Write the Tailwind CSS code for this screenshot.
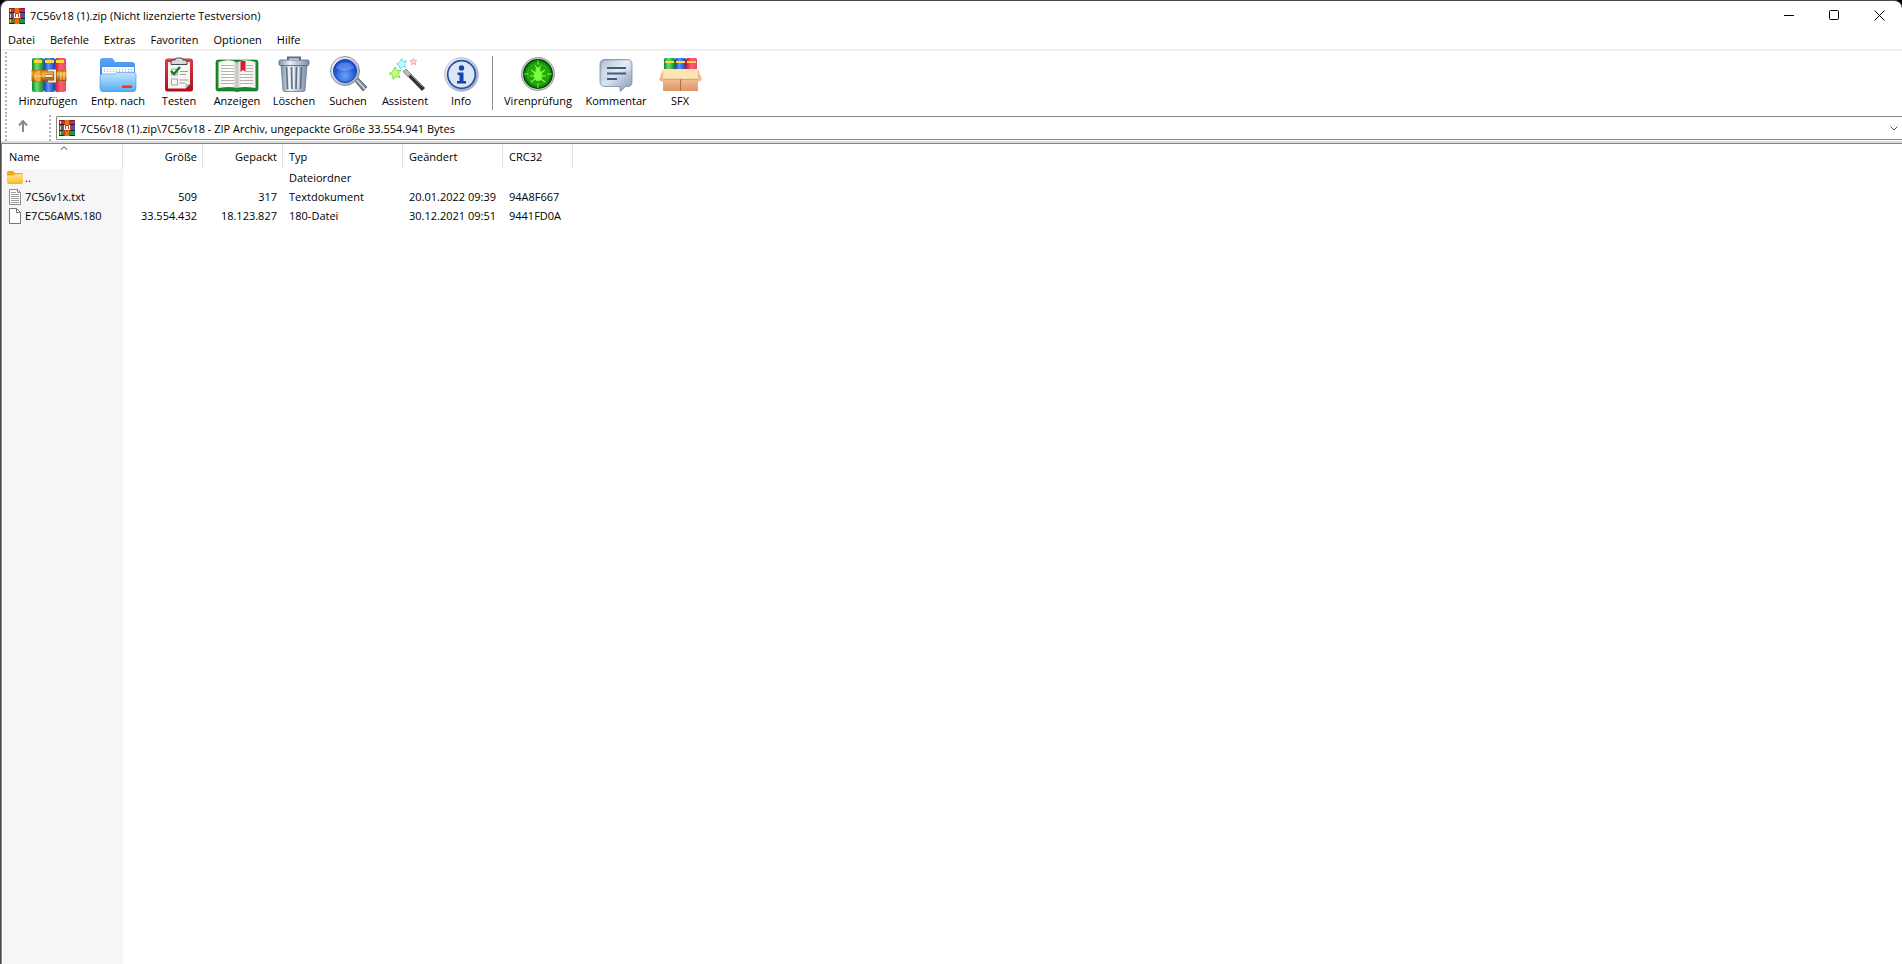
<!DOCTYPE html>
<html lang="de">
<head>
<meta charset="utf-8">
<title>7C56v18 (1).zip (Nicht lizenzierte Testversion)</title>
<script src="https://cdn.jsdelivr.net/npm/@tailwindcss/browser@4"></script>
</head>
<body class="bg-black">
<svg class="absolute size-0" aria-hidden="true">
  <defs>
    <linearGradient id="gGreen"><stop offset="0" stop-color="#0a8a2c"/><stop offset=".4" stop-color="#6fdc74"/><stop offset="1" stop-color="#08812a"/></linearGradient>
    <linearGradient id="gBlue"><stop offset="0" stop-color="#1440b4"/><stop offset=".4" stop-color="#5c97f5"/><stop offset="1" stop-color="#1a3fb0"/></linearGradient>
    <linearGradient id="gRed"><stop offset="0" stop-color="#d4143a"/><stop offset=".5" stop-color="#ff5d74"/><stop offset="1" stop-color="#e04a66"/></linearGradient>
    <linearGradient id="gBelt" x2="0" y2="1"><stop offset="0" stop-color="#b9690f"/><stop offset=".35" stop-color="#f8b84a"/><stop offset="1" stop-color="#9c500a"/></linearGradient>
    <linearGradient id="gFolder" x2="0" y2="1"><stop offset="0" stop-color="#c5e6ff"/><stop offset="1" stop-color="#4fa9f6"/></linearGradient>
    <linearGradient id="gBack" x2="0" y2="1"><stop offset="0" stop-color="#5aa5fb"/><stop offset="1" stop-color="#2567d8"/></linearGradient>
    <linearGradient id="gClip" x2="0" y2="1"><stop offset="0" stop-color="#e23a44"/><stop offset="1" stop-color="#a90f1c"/></linearGradient>
    <linearGradient id="gPageL"><stop offset="0" stop-color="#f4f4ef"/><stop offset=".75" stop-color="#ffffff"/><stop offset="1" stop-color="#bdbdb6"/></linearGradient>
    <linearGradient id="gPageR"><stop offset="0" stop-color="#c4c4bd"/><stop offset=".25" stop-color="#ffffff"/><stop offset="1" stop-color="#efefe9"/></linearGradient>
    <linearGradient id="gSteel"><stop offset="0" stop-color="#7d90a6"/><stop offset=".35" stop-color="#e8eff7"/><stop offset="1" stop-color="#7d90a6"/></linearGradient>
    <linearGradient id="gSteelV" x2="1" y2="1"><stop offset="0" stop-color="#8fa2bc"/><stop offset=".45" stop-color="#dbe5f1"/><stop offset="1" stop-color="#8295b0"/></linearGradient>
    <radialGradient id="gLens" cy=".7"><stop offset="0" stop-color="#6aa4fb"/><stop offset="1" stop-color="#1c4fd0"/></radialGradient>
    <radialGradient id="gVirus"><stop offset="0" stop-color="#3fc818"/><stop offset="1" stop-color="#0c8a05"/></radialGradient>
    <linearGradient id="gRing" x2="1" y2="1"><stop offset="0" stop-color="#ffffff"/><stop offset="1" stop-color="#8f9cb3"/></linearGradient>
    <linearGradient id="gBox" x2="0" y2="1"><stop offset="0" stop-color="#f6c399"/><stop offset="1" stop-color="#dc9463"/></linearGradient>
    <linearGradient id="gYellow" x2="0" y2="1"><stop offset="0" stop-color="#ffe38c"/><stop offset="1" stop-color="#fbc02f"/></linearGradient>
    <symbol id="rar" viewBox="0 0 16 16">
      <rect width="16" height="5" fill="#d0264f"/><rect y="5" width="16" height="5" fill="#4650c0"/><rect y="10" width="16" height="6" fill="#179a3b"/>
      <path d="M0 .5h16" stroke="#8e1638"/><path d="M0 4.500h16M0 10.500h16M0 15.500h16" stroke="#1d2148"/>
      <path d="M1.500 1v3M1.500 6v4M1.500 11.500v3" stroke="#f5cf3a"/>
      <rect x="5" width="6" height="16" fill="#e8701c"/><path d="M5.500 0v16M10.500 0v16" stroke="#a9470c"/>
      <rect x="4" y="5" width="8" height="6" fill="#b8441b"/><path d="M5.500 5v4.500h5V5" fill="none" stroke="#fff"/><path d="M8 6v4" stroke="#fff" stroke-width="2"/>
    </symbol>
  </defs>
</svg>

<div class="flex h-screen flex-col overflow-hidden rounded-t-lg border-t border-l border-[#4a4a4c] bg-white font-['Open_Sans','Noto_Sans',sans-serif] text-[11px] leading-4 text-black">
  <header class="flex h-[29px] shrink-0 items-center pl-2">
    <svg class="size-4 shrink-0"><use href="#rar"/></svg>
    <h1 class="flex-1 pl-[5px]">7C56v18 (1).zip (Nicht lizenzierte Testversion)</h1>
    <button aria-label="Minimieren" class="flex h-full w-[46px] items-center justify-center"><svg class="h-[11px] w-[10px]" viewBox="0 0 10 11"><path d="M0 5.500h10" stroke="#000"/></svg></button>
    <button aria-label="Maximieren" class="flex h-full w-[45px] items-center justify-center"><svg class="size-[11px]" viewBox="0 0 11 11"><rect x=".5" y=".5" width="9" height="9" rx="1" fill="none" stroke="#000"/></svg></button>
    <button aria-label="Schließen" class="flex h-full w-[45px] items-center justify-center"><svg class="size-[11px]" viewBox="0 0 11 11"><path d="M.5.5l10 10M10.500.5l-10 10" stroke="#000"/></svg></button>
  </header>

  <nav class="flex h-[19px] shrink-0 items-end gap-[15px] pb-px pl-[7px]" aria-label="Menü">
    <button>Datei</button><button>Befehle</button><button>Extras</button><button>Favoriten</button><button>Optionen</button><button>Hilfe</button>
  </nav>

  <div class="flex h-[66px] shrink-0 border-t-2 border-[#f0f0f0] pl-1">
    <div class="mt-px mr-1 w-[2px] bg-[repeating-linear-gradient(to_bottom,#b4b4b4_0_2px,#fff_2px_4px)]"></div>
    <div class="flex pt-[5px]" role="toolbar" aria-label="Werkzeugleiste">
      <button class="flex w-[74px] flex-col items-center gap-px whitespace-nowrap">
        <svg class="h-9 w-11" viewBox="0 0 44 36">
          <rect x="6" y="2" width="12" height="34" rx="2" fill="url(#gGreen)"/><rect x="18" y="2" width="11" height="34" rx="2" fill="url(#gBlue)"/><rect x="29" y="2" width="11" height="34" rx="2" fill="url(#gRed)"/>
          <path d="M8 5.500h8M19 5.500h9M30 5.500h8" stroke="#ffd83a" stroke-width="3"/>
          <rect x="5.500" y="14" width="35" height="11" fill="url(#gBelt)"/>
          <path d="M13 14a6 6 0 1 0 0 12h2V14z" fill="#f3ad3c" stroke="#a8620c" stroke-width=".7"/>
          <path d="M8 20h13M35 16v8M38 16v8" stroke="#ffd98a"/>
          <path d="M22 14.500h7v11h-7M26 20h-6" fill="none" stroke="#713d0a" stroke-width="3"/><path d="M22 14.500h7v11h-7M26 20h-6" fill="none" stroke="#f2f2f2" stroke-width="1.800"/>
        </svg><span>Hinzufügen</span></button>
      <button class="flex w-[66px] flex-col items-center gap-px whitespace-nowrap">
        <svg class="h-9 w-11" viewBox="0 0 44 36">
          <path d="M4 32V5q0-3 3-3h8q2 0 3 2l1 2h17q3 0 3 3v23z" fill="url(#gBack)"/>
          <path d="M6 11h32v13H6z" fill="#f9fbfd"/><path d="M8 13.500h29M8 15.500h29" stroke="#aab4be" stroke-dasharray="1 2"/>
          <path d="M4 20q0-2 2-2h13l2-1.500h17q2 0 2 2V32q0 4-4 4H8q-4 0-4-4z" fill="url(#gFolder)" stroke="#3f91e4" stroke-width=".6"/>
          <rect x="26" y="29.500" width="10" height="2.500" fill="#e63c1a"/>
        </svg><span>Entp. nach</span></button>
      <button class="flex w-[56px] flex-col items-center gap-px whitespace-nowrap">
        <svg class="h-9 w-11" viewBox="0 0 44 36">
          <rect x="8" y="2.500" width="28" height="33" rx="2.500" fill="url(#gClip)"/>
          <path d="M11 6h22v22l-4.500 4.500H11z" fill="#f7f6f3"/><path d="M33 28l-4.500 4.500V28z" fill="#bdb9b5"/>
          <path d="M14 8.500V6q0-2 2-2h2q0-2 2-2h4q2 0 2 2h2q2 0 2 2v2.500z" fill="#d7d9dc" stroke="#474a50"/>
          <path d="M14.500 13h6v6h-6zM14.500 23h6v6h-6z" fill="none" stroke="#a3a3a3"/>
          <path d="M14 15l3 3 6-7" fill="none" stroke="#118223" stroke-width="2.400"/>
          <path d="M23 15.500h8M23 18.500h6M22.500 24h9M22.500 27h6" stroke="#a09c98"/>
        </svg><span>Testen</span></button>
      <button class="flex w-[60px] flex-col items-center gap-px whitespace-nowrap">
        <svg class="h-9 w-11" viewBox="0 0 44 36">
          <path d="M1 6q0-2 2-2h38q2 0 2 2v27q0 2-2 2H25q-3 1-6 0H3q-2 0-2-2z" fill="#198a2b" stroke="#0b641b" stroke-width=".6"/>
          <path d="M3.500 6Q15 2.500 22 6.500V32q-7-2-18.500 0z" fill="url(#gPageL)"/><path d="M40.500 6Q29 2.500 22 6.500V32q7-2 18.500 0z" fill="url(#gPageR)"/>
          <path d="M6 9.500h13M6 12.500h13M6 15.500h13M6 18.500h13M6 21.500h13M6 24.500h13M6 27.500h13M25 18.500h13M31 9.500h7M31 12.500h7M31 15.500h7M25 21.500h13M25 24.500h13M25 27.500h13" stroke="#b4b4b0"/>
          <path d="M25.500 5h5v11L28 14l-2.500 2z" fill="#d3202b"/>
        </svg><span>Anzeigen</span></button>
      <button class="flex w-[54px] flex-col items-center gap-px whitespace-nowrap">
        <svg class="h-9 w-11" viewBox="0 0 44 36">
          <path d="M16 4V1.500h12V4" fill="none" stroke="#5a6b80" stroke-width="2"/>
          <path d="M9 9h26l-2 25q0 1.500-2 1.500H13q-2 0-2-1.500z" fill="url(#gSteel)" stroke="#5d6f86" stroke-width=".7"/>
          <path d="M14.500 11l1 22M19.500 11l.5 22M24.500 11L24 33M29.500 11l-1 22" stroke="#62748a" stroke-width="1.700"/><path d="M16.500 11l1 22M21.500 11l.3 22M26.500 11L26 33" stroke="#f4f8fc"/>
          <rect x="7" y="4" width="30" height="5.500" rx="1.500" fill="url(#gSteel)" stroke="#536478" stroke-width=".8"/>
        </svg><span>Löschen</span></button>
      <button class="flex w-[54px] flex-col items-center gap-px whitespace-nowrap">
        <svg class="h-9 w-11" viewBox="0 0 44 36">
          <path d="M28 24l3-3 10 10-4 4z" fill="#79828d" stroke="#454d58" stroke-width=".7"/><path d="M30 23l9 10" stroke="#d0d7df" stroke-width="1.500"/>
          <circle cx="19" cy="15" r="14.500" fill="url(#gRing)" stroke="#8795ab"/>
          <circle cx="19" cy="15" r="11.500" fill="url(#gLens)" stroke="#2140a0"/>
          <path d="M10 12a9.500 8 0 0 1 18 0q-9 6-18 0z" fill="#9ec0ff" opacity=".4"/>
        </svg><span>Suchen</span></button>
      <button class="flex w-[60px] flex-col items-center gap-px whitespace-nowrap">
        <svg class="h-9 w-11" viewBox="0 0 44 36">
          <path d="M20 15.500l3-2.500 19 19-3 3z" fill="#34343a"/><path d="M20 15.500l3-2.500 5 5-3 3z" fill="#b9b9bd" stroke="#77777d" stroke-width=".6"/><path d="M27 18l12.500 12.500" stroke="#88888f"/>
          <path d="M12 11l1.700 3.600 4-.2-2.300 3.400 1.600 3.600-3.900-.8-3 2.700-.5-4L6 17.500l3.600-1.700z" fill="#c9f98a" stroke="#7fdf35"/>
          <path d="M18.500 2.500l1.500 3 3.500-.5-2 3 1.500 3-3.500-.5-2.500 2.500-.5-3.500-3-1.500 3-1.500z" fill="#c8f8ff" stroke="#4fd6f2" stroke-width=".8"/>
          <path d="M30.500 2.500l.8 2.200 2.500-.2-1.800 1.700 1 2.500-2.500-1.200-2 1.300.4-2.500-1.900-1.500 2.500-.2z" fill="#ffe2e2" stroke="#f28a8a" stroke-width=".7"/>
        </svg><span>Assistent</span></button>
      <button class="flex w-[52px] flex-col items-center gap-px whitespace-nowrap">
        <svg class="h-9 w-11" viewBox="0 0 44 36">
          <circle cx="22.500" cy="18.500" r="16.800" fill="url(#gRing)" stroke="#a9b3c4" stroke-width=".8"/>
          <circle cx="22.500" cy="18.500" r="13.800" fill="#dce6f5" stroke="#2450ac" stroke-width="1.700"/>
          <circle cx="22.500" cy="12" r="2.700" fill="#1642b0"/><path d="M18.500 16.500h6V25h2.500v2.500h-9V25h2.500v-6h-2z" fill="#1642b0"/>
        </svg><span>Info</span></button>
      <div class="mr-1 ml-[5px] h-[54px] w-px bg-[#8c8c8c]"></div>
      <button class="flex w-[82px] flex-col items-center gap-px whitespace-nowrap">
        <svg class="h-9 w-11" viewBox="0 0 44 36">
          <circle cx="22" cy="18" r="16.500" fill="#c8cbc8" stroke="#8d928d" stroke-width=".8"/>
          <circle cx="22" cy="18" r="14.200" fill="url(#gVirus)" stroke="#074407" stroke-width="1.500"/>
          <circle cx="22" cy="18" r="10.500" fill="none" stroke="#46d22c" stroke-width=".6"/>
          <path d="M22 4v5M22 27v5M8 18h5M31 18h5" stroke="#72f04c"/>
          <ellipse cx="22" cy="19.500" rx="4" ry="5.500" fill="#7dff3c"/><circle cx="22" cy="13.500" r="2.300" fill="#7dff3c"/>
          <path d="M19 17l-4-3M25 17l4-3M18 20h-4M26 20h4M19 23l-4 3M25 23l4 3M21 12l-2-2.500M23 12l2-2.500" stroke="#7dff3c" stroke-width="1.200"/>
        </svg><span>Virenprüfung</span></button>
      <button class="flex w-[74px] flex-col items-center gap-px whitespace-nowrap">
        <svg class="h-9 w-11" viewBox="0 0 44 36">
          <path d="M11 3.500h22q5 0 5 5v17q0 5-4 5h-2.500l-5 5-1-5H11q-5 0-5-5v-17q0-5 5-5z" fill="url(#gSteelV)" stroke="#7a8ca8" stroke-width=".8"/>
          <path d="M11.500 5h21q4 0 4 4v6Q22 14 7.500 22V9q0-4 4-4z" fill="#fff" opacity=".3"/>
          <path d="M13 12h19M13 17.500h19M13 23h10" stroke="#465b7c" stroke-width="1.800"/>
        </svg><span>Kommentar</span></button>
      <button class="flex w-[54px] flex-col items-center gap-px whitespace-nowrap">
        <svg class="h-9 w-11" viewBox="0 0 44 36">
          <rect x="6" y="2" width="11" height="14" rx="1.500" fill="url(#gGreen)"/><rect x="17" y="2" width="11" height="14" rx="1.500" fill="url(#gBlue)"/><rect x="28" y="2" width="11" height="14" rx="1.500" fill="url(#gRed)"/>
          <path d="M7 6h9M18 6h9M29 6h9" stroke="#ffd83a" stroke-width="2"/>
          <path d="M5 22h35v13H5z" fill="url(#gBox)"/><path d="M22.500 23v12" stroke="#b06e42"/>
          <path d="M5 13h35v10H5z" fill="#fde3b6"/><path d="M5 13L1 24l4 2zM40 13l4 11-4 2z" fill="#efb98a"/><path d="M5 23.300h35" stroke="#c98a5c" stroke-width=".7"/>
        </svg><span>SFX</span></button>
    </div>
  </div>

  <div class="flex h-[26px] shrink-0 pl-1">
    <div class="w-[2px] bg-[repeating-linear-gradient(to_bottom,#b4b4b4_0_2px,#fff_2px_4px)]"></div>
    <button aria-label="Übergeordneter Ordner" class="flex w-8 items-center justify-center pb-1"><svg class="h-3 w-[10px]" viewBox="0 0 10 12"><path d="M5 12V1M1 5.500L5 1l4 4.500" fill="none" stroke="#8a8a8a" stroke-width="2"/></svg></button>
    <div class="ml-[10px] w-[2px] bg-[repeating-linear-gradient(to_bottom,#b4b4b4_0_2px,#fff_2px_4px)]"></div>
    <div class="mt-px ml-[5px] flex h-6 flex-1 items-center rounded-l-xs border-y border-l border-[#868686] pl-[2px]">
      <svg class="size-4 shrink-0"><use href="#rar"/></svg>
      <select aria-label="Adresse" class="h-full min-w-0 flex-1 appearance-none bg-white pt-px pl-[5px] outline-none"><option>7C56v18 (1).zip\7C56v18 - ZIP Archiv, ungepackte Größe 33.554.941 Bytes</option></select>
      <svg class="mr-1 h-[5px] w-2 shrink-0" viewBox="0 0 8 5"><path d="M.5.5L4 4 7.500.5" fill="none" stroke="#555"/></svg>
    </div>
  </div>

  <main class="min-h-0 flex-1 border-t-2 border-[#dcdcdc]">
    <div class="h-full border-t border-l border-[#828790] pl-px">
      <table class="h-full w-[570px] table-fixed border-separate border-spacing-0 whitespace-nowrap">
        <colgroup><col class="w-[120px]"><col class="w-[80px]"><col class="w-[80px]"><col class="w-[120px]"><col class="w-[100px]"><col class="w-[70px]"></colgroup>
        <thead>
          <tr class="h-[25px] *:border-r *:border-[#e2e2e2] *:py-0 *:pr-[5px] *:pl-[6px] *:text-left *:font-normal">
            <th scope="col" aria-sort="ascending" class="relative">Name<svg class="absolute top-[2px] left-[57px] h-1 w-2" viewBox="0 0 8 4"><path d="M.5 4L4 .7 7.500 4" fill="none" stroke="#444"/></svg></th>
            <th scope="col"><div class="text-right">Größe</div></th>
            <th scope="col"><div class="text-right">Gepackt</div></th>
            <th scope="col">Typ</th><th scope="col">Geändert</th><th scope="col">CRC32</th>
          </tr>
        </thead>
        <tbody>
          <tr class="h-[19px] *:px-[6px] *:pt-0 *:pb-px">
            <td class="bg-[#f6f6f6]"><div class="-ml-[2px] flex items-center gap-[2px]"><svg class="size-4" viewBox="0 0 16 16"><path d="M0 2.500Q0 1 1.500 1H6L8 3h6.500Q16 3 16 4.500v3H0z" fill="#f2ab0c"/><path d="M0 5.500h6L8 4h6.500Q16 4 16 5.500V12q0 1.500-1.500 1.500h-13Q0 13.500 0 12z" fill="url(#gYellow)"/><path d="M1 13.300h14" stroke="#e09c10" stroke-width=".7"/></svg>..</div></td>
            <td></td><td></td><td>Dateiordner</td><td></td><td></td>
          </tr>
          <tr class="h-[19px] *:px-[6px] *:pt-0 *:pb-px">
            <td class="bg-[#f6f6f6]"><div class="-ml-[2px] flex items-center gap-[2px]"><svg class="size-4" viewBox="0 0 16 16"><path d="M2.500.5h8l3 3v12h-11z" fill="#fff" stroke="#8a8a88"/><path d="M10.500.5v3h3" fill="none" stroke="#8a8a88"/><path d="M4 3.500h5M4 5.500h8M4 7.500h8M4 9.500h8M4 11.500h8M4 13.500h8" stroke="#9c9c9a"/></svg>7C56v1x.txt</div></td>
            <td class="text-right">509</td><td class="text-right">317</td><td>Textdokument</td><td>20.01.2022 09:39</td><td>94A8F667</td>
          </tr>
          <tr class="h-[19px] *:px-[6px] *:pt-0 *:pb-px">
            <td class="bg-[#f6f6f6]"><div class="-ml-[2px] flex items-center gap-[2px]"><svg class="size-4" viewBox="0 0 16 16"><path d="M2.500.5h7l4 4v11h-11z" fill="#fff" stroke="#777775"/><path d="M9.500.5v4h4" fill="none" stroke="#777775"/></svg>E7C56AMS.180</div></td>
            <td class="text-right">33.554.432</td><td class="text-right">18.123.827</td><td>180-Datei</td><td>30.12.2021 09:51</td><td>9441FD0A</td>
          </tr>
          <tr aria-hidden="true"><td class="bg-[#f6f6f6]"></td><td colspan="5"></td></tr>
        </tbody>
      </table>
    </div>
  </main>
</div>
</body>
</html>
